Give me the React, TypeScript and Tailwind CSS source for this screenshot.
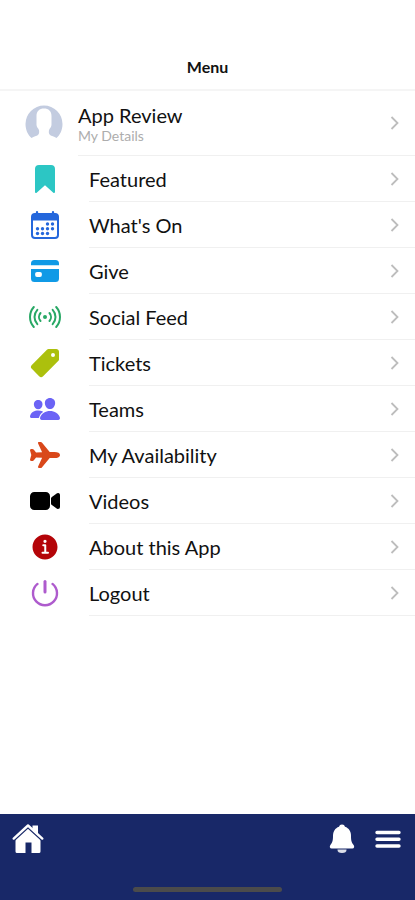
import { ReactNode } from "react"
import {
  IoAirplane,
  IoBookmark,
  IoCard,
  IoInformationCircle,
  IoPeople,
  IoPricetag,
  IoRadioOutline,
  IoVideocam,
} from "react-icons/io5"

const CalendarIcon = () => (
  <svg viewBox="0 0 512 512" className="size-8" fill="currentColor">
    <rect
      x="48"
      y="80"
      width="416"
      height="384"
      rx="48"
      fill="none"
      stroke="currentColor"
      strokeWidth="32"
    />
    <path d="M472 184V144a72 72 0 0 0-72-72H112a72 72 0 0 0-72 72v40z" />
    <path
      d="M128 48v40M384 48v40"
      stroke="currentColor"
      strokeWidth="36"
      strokeLinecap="round"
    />
    {[
      [296, 240],
      [376, 240],
      [136, 316],
      [216, 316],
      [296, 316],
      [376, 316],
      [136, 392],
      [216, 392],
      [296, 392],
    ].map(([cx, cy]) => (
      <circle key={`${cx}-${cy}`} cx={cx} cy={cy} r="27" />
    ))}
  </svg>
)

const PowerIcon = () => (
  <svg
    viewBox="0 0 32 32"
    className="size-8"
    fill="none"
    stroke="currentColor"
    strokeLinecap="round"
  >
    <path d="M8.500 6.900a12 12 0 1 0 15 0" strokeWidth="2.400" />
    <path d="M16 4.500v10.500" strokeWidth="3" />
  </svg>
)

const HomeIcon = () => (
  <svg viewBox="0 0 32 32" className="size-8" fill="currentColor">
    <path d="M3.500 16L16 4.500 28.500 16v12.500A1.500 1.500 0 0 1 27 30h-7.500V19.500h-6V30H5a1.500 1.500 0 0 1-1.500-1.500z" />
    <path
      d="M1.500 17.300L16 4.100l14.500 13.200"
      fill="none"
      stroke="#182868"
      strokeWidth="2.600"
    />
    <path d="M20.500 2.500H26v10l-5.500-5z" />
    <path
      d="M1.700 15.600L16 2.500l14.300 13.100"
      fill="none"
      stroke="currentColor"
      strokeWidth="2.400"
      strokeLinecap="round"
      strokeLinejoin="round"
    />
  </svg>
)

const BellIcon = () => (
  <svg viewBox="0 0 26 30" className="h-[30px] w-[26px]" fill="currentColor">
    <path d="M13 .5a3 3 0 0 1 3 2.300c4 1.400 6 4.700 6 9.200 0 4.500 .6 6.500 2.600 9 1.100 1.400 .7 3.500-1.300 3.500H2.700c-2 0-2.400-2.100-1.300-3.500C3.400 18.500 4 16.500 4 12c0-4.500 2-7.800 6-9.200A3 3 0 0 1 13 .5z" />
    <path d="M8.500 25.500h9v.5c0 2-1.500 3-4.500 3s-4.500-1-4.500-3z" opacity="0.850" />
  </svg>
)

const Avatar = () => (
  <svg viewBox="0 0 38 38" className="size-[38px] shrink-0">
    <path
      d="M6.500 33C3 30 .5 25 .5 19a18.500 18.500 0 0 1 37 0c0 6-2.500 11-6 14-2.500-1.500-5-2-6.500-3-1.500-1.200-1.500-4-.5-6 1.500-1.500 2.200-3 2-6V11c0-5-3-7.500-7.500-7.500S11.500 6 11.500 11v7c-.2 3 .5 4.500 2 6 1 2 1 4.800-.5 6-1.500 1-4 1.500-6.500 3z"
      fill="#c3cce0"
    />
  </svg>
)

const Chevron = () => (
  <svg
    viewBox="0 0 10 16"
    className="h-4 w-[10px] shrink-0"
    fill="none"
    stroke="#bdbdbd"
    strokeWidth="1.800"
  >
    <path d="M1.500 2l6 6-6 6" />
  </svg>
)

const items: { label: string; color: string; icon: ReactNode }[] = [
  { label: "Featured", color: "text-[#2cc6c4]", icon: <IoBookmark /> },
  { label: "What's On", color: "text-[#2467dc]", icon: <CalendarIcon /> },
  { label: "Give", color: "text-[#109ae6]", icon: <IoCard /> },
  { label: "Social Feed", color: "text-[#28a865]", icon: <IoRadioOutline /> },
  { label: "Tickets", color: "text-[#acc00d]", icon: <IoPricetag /> },
  { label: "Teams", color: "text-[#6b63f5]", icon: <IoPeople /> },
  { label: "My Availability", color: "text-[#d9481a]", icon: <IoAirplane /> },
  { label: "Videos", color: "text-black", icon: <IoVideocam /> },
  {
    label: "About this App",
    color: "text-[#b40408]",
    icon: <IoInformationCircle />,
  },
  { label: "Logout", color: "text-[#ae5bcd]", icon: <PowerIcon /> },
]

const App = () => {
  return (
    <div className="flex min-h-screen flex-col bg-white font-['Lato',sans-serif] text-[#111]">
      <header className="border-b-2 border-[#f5f5f5] pt-[55px] pb-[10px] text-center">
        <h1 className="text-base leading-6 font-bold">Menu</h1>
      </header>

      <main className="flex-1">
        <a href="#details" className="flex items-center pl-[25px]">
          <Avatar />
          <div className="ml-[15px] flex h-[65px] flex-1 items-center justify-between border-b border-[#f0f0f0] pr-[15px]">
            <div className="pt-0.5">
              <div className="text-xl leading-6">App Review</div>
              <div className="text-sm leading-[18px] text-[#adadad]">
                My Details
              </div>
            </div>
            <Chevron />
          </div>
        </a>
        <nav>
          {items.map((item) => (
            <a
              key={item.label}
              href="#menu"
              className="flex items-center pl-[29px]"
            >
              <span className={`text-[32px] ${item.color}`}>{item.icon}</span>
              <span className="ml-7 flex h-[46px] flex-1 items-center justify-between border-b border-[#f0f0f0] pr-[15px] text-xl">
                {item.label}
                <Chevron />
              </span>
            </a>
          ))}
        </nav>
      </main>

      <footer className="bg-[#182868] pt-[9px] pb-2 text-white">
        <div className="flex items-center justify-between pr-[14px] pl-3">
          <button aria-label="Home">
            <HomeIcon />
          </button>
          <div className="flex items-center gap-5">
            <button aria-label="Notifications">
              <BellIcon />
            </button>
            <button aria-label="Menu">
              <svg viewBox="0 0 26 20" className="h-5 w-[26px]">
                <path
                  d="M2 3.500h22M2 10.200h22M2 17h22"
                  stroke="currentColor"
                  strokeWidth="3.400"
                  strokeLinecap="round"
                />
              </svg>
            </button>
          </div>
        </div>
        <div className="mx-auto mt-8 h-[5px] w-[36%] rounded-full bg-[#4b4b4b]" />
      </footer>
    </div>
  )
}

export default App
